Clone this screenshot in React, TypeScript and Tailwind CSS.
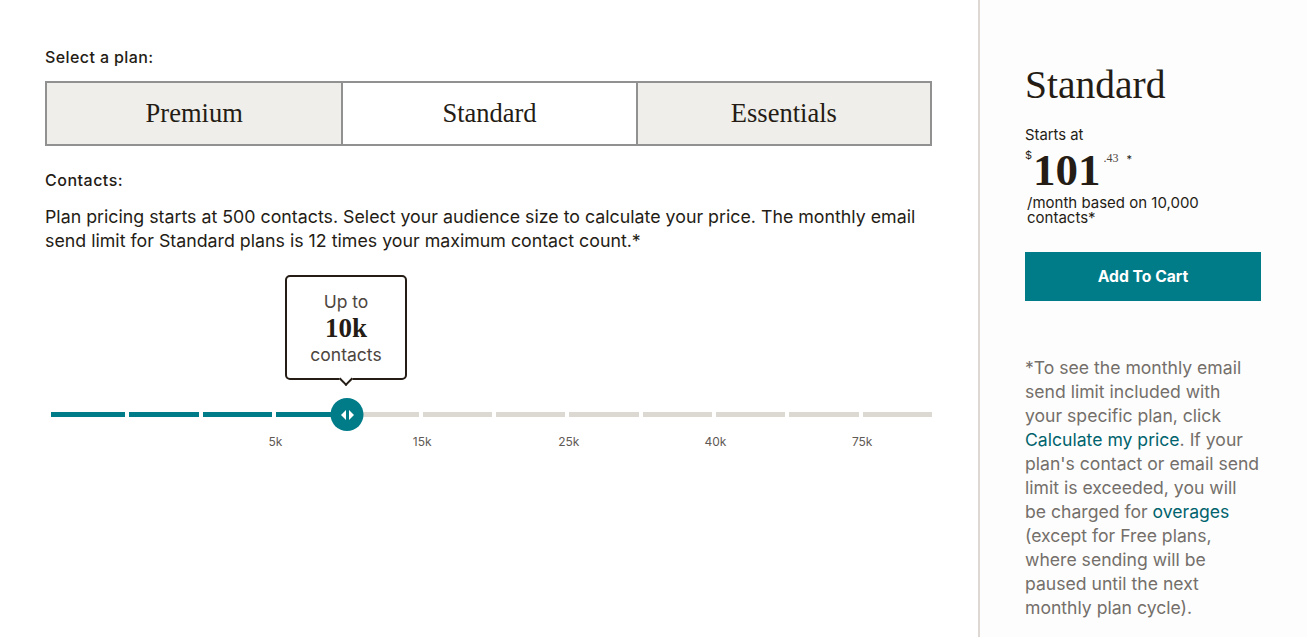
import React from "react";

const plans = ["Premium", "Standard", "Essentials"];
const segments = Array.from({ length: 12 }, (_, i) => i);
const ticks = [
  { label: "5k", cls: "col-start-3 col-span-2" },
  { label: "15k", cls: "col-start-5 col-span-2" },
  { label: "25k", cls: "col-start-7 col-span-2" },
  { label: "40k", cls: "col-start-9 col-span-2" },
  { label: "75k", cls: "col-start-11 col-span-2" },
];

const ThumbIcon = () => (
  <svg width="14" height="12" viewBox="0 0 14 12" fill="white">
    <polygon points="5.5,1 5.5,11 0.5,6" strokeLinejoin="round" />
    <polygon points="8.5,1 8.5,11 13.5,6" strokeLinejoin="round" />
  </svg>
);

const ContactSlider = ({ filled }: { filled: number }) => {
  return (
    <div className="relative mt-[22px] pt-[123px] pl-[11px]">
      {/* tooltip over the thumb */}
      <div className="absolute top-0 left-[301px] -translate-x-1/2 w-[122px] h-[105px] rounded-[5px] border-2 border-[#241c15] bg-white flex flex-col items-center pt-[14px]">
        <span className="text-[17.5px] leading-[22px] text-[#4d4640]">Up to</span>
        <span className="font-['Liberation_Serif',serif] font-bold text-[27px] leading-[31px] text-[#241c15]">10k</span>
        <span className="text-[17.5px] leading-[22px] text-[#4d4640]">contacts</span>
        <span className="absolute -bottom-[6px] left-1/2 -translate-x-1/2 rotate-45 w-[10px] h-[10px] bg-white border-r-2 border-b-2 border-[#241c15]" />
      </div>

      <div className="relative h-[33px] flex items-center">
        <div className="grid grid-cols-12 gap-1 w-full">
          {segments.map((i) => (
            <div
              key={i}
              className={
                (i < filled ? "h-[5px] bg-[#007c89]" : "h-[5px] bg-[#dcd9d2]") + (i === 0 ? " -ml-[5px]" : "")
              }
            />
          ))}
        </div>
        <div className="absolute top-0 left-[291px] -translate-x-1/2 w-[33px] h-[33px] rounded-full bg-[#007c89] flex items-center justify-center">
          <ThumbIcon />
        </div>
      </div>

      <div className="grid grid-cols-12 gap-1 mt-[3px]">
        {ticks.map((t) => (
          <span key={t.label} className={t.cls + " pl-[3px] text-center text-[12px] leading-[16px] text-[#5f5a55]"}>
            {t.label}
          </span>
        ))}
      </div>
    </div>
  );
};

export default function App() {
  return (
    <div className="flex min-h-[637px] bg-white font-['Inter','Liberation_Sans',sans-serif] text-[#241c15]">
      <main className="w-[978px] pl-[45px] pr-[46px] pt-[46px]">
        <p className="text-[16px] tracking-[0.4px] leading-[22px] font-medium">Select a plan:</p>
        <div className="mt-[13px] grid grid-cols-3 border-2 border-[#919191] h-[65px]">
          {plans.map((p, i) => (
            <button
              key={p}
              className={
                "font-['Liberation_Serif',serif] text-[26.5px] text-[#241c15] " +
                (i === 1 ? "bg-white" : "bg-[#efeeea]") +
                (i > 0 ? " border-l-2 border-[#919191]" : "")
              }
            >
              {p}
            </button>
          ))}
        </div>

        <p className="mt-[23px] text-[16px] tracking-[0.5px] leading-[22px] font-medium">Contacts:</p>
        <p className="mt-[14px] text-[17.8px] leading-[24px]">
          Plan pricing starts at 500 contacts. Select your audience size to calculate your price. The monthly email
          send limit for Standard plans is 12 times your maximum contact count.*
        </p>

        <ContactSlider filled={4} />
      </main>

      <aside className="flex-1 border-l-2 border-[#ddd8d3] bg-[#fdfdfd] pl-[45px] pr-[46px] pt-[64px]">
        <h2 className="font-['Liberation_Serif',serif] text-[39.5px] leading-[42px] text-[#241c15]">Standard</h2>
        <p className="mt-[20px] text-[14.8px] leading-[18px]">Starts at</p>
        <div className="mt-[4px] flex items-start h-[44px]">
          <span className="text-[11px] leading-none mt-[2px]">$</span>
          <span className="font-['Liberation_Serif',serif] font-bold text-[45px] leading-none ml-[1px]">101</span>
          <span className="font-['Liberation_Serif',serif] text-[12px] leading-none mt-[4px] ml-[3px] text-[#4d4640]">.43</span>
          <span className="text-[11px] leading-none mt-[6px] ml-[8px]">*</span>
        </div>
        <p className="mt-[3px] pl-[2px] text-[15px] leading-[15px]">
          /month based on 10,000
          <br />
          contacts*
        </p>
        <button className="mt-[27px] w-full h-[49px] bg-[#007c89] text-white text-[15.7px] font-bold">
          Add To Cart
        </button>
        <p className="mt-[55px] whitespace-nowrap text-[17.6px] leading-[24px] text-[#746f6a]">
          *To see the monthly email
          <br />
          send limit included with
          <br />
          your specific plan, click
          <br />
          <a className="text-[#00636d]">Calculate my price</a>. If your
          <br />
          plan's contact or email send
          <br />
          limit is exceeded, you will
          <br />
          be charged for <a className="text-[#00636d]">overages</a>
          <br />
          (except for Free plans,
          <br />
          where sending will be
          <br />
          paused until the next
          <br />
          monthly plan cycle).
        </p>
      </aside>
    </div>
  );
}
